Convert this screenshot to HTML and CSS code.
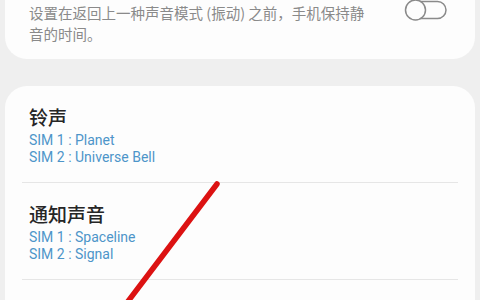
FILE: index.html
```html
<!DOCTYPE html>
<html lang="zh-CN">

<head>
   <meta charset="UTF-8">
   <meta name="viewport" content="width=device-width, initial-scale=1.0">
   <title>声音设置</title>
   <link rel="stylesheet" href="styles.css">
</head>

<body>
   <div class="card top-card">
      <p class="desc">设置在返回上一种声音模式 (振动) 之前，手机保持静音的时间。</p>
      <svg class="switch" width="46" height="24" viewBox="0 0 46 24">
         <rect x="3" y="3.5" width="40" height="17" rx="8.5" fill="none" stroke="#8a8a8a" stroke-width="1.5"/>
         <circle cx="12.5" cy="12" r="10" fill="#fdfdfd" stroke="#8a8a8a" stroke-width="1.5"/>
      </svg>
   </div>

   <div class="card list-card">
      <div class="row">
         <p class="row-title">铃声</p>
         <p class="row-sub">SIM 1 : Planet</p>
         <p class="row-sub">SIM 2 : Universe Bell</p>
      </div>
      <div class="row">
         <p class="row-title">通知声音</p>
         <p class="row-sub">SIM 1 : Spaceline</p>
         <p class="row-sub">SIM 2 : Signal</p>
      </div>
      <div class="row">
         <p class="row-title">系统声音</p>
      </div>
   </div>

   <!-- red mark drawn over the screenshot -->
   <svg class="mark" width="480" height="300" viewBox="0 0 480 300">
      <line x1="217" y1="184" x2="126" y2="304" stroke="#dc1212" stroke-width="5.5" stroke-linecap="round"/>
   </svg>
</body>
</html>
```

FILE: styles.css
```css
body{
   margin: 0;
   background-color: #efefef;
   font-family: Roboto, "Noto Sans CJK SC", sans-serif;
   position: relative;
   height: 300px;
   overflow: hidden;
}
p{
   margin: 0;
}
.card{
   background-color: #fdfdfd;
   margin: 0 5px;
}
.top-card{
   display: flex;
   justify-content: space-between;
   align-items: flex-start;
   padding: 2px 26px 15px 24px;
   border-radius: 0 0 22px 22px;
}
.desc{
   max-width: 342px;
   font-family: "Noto Sans CJK SC", sans-serif;
   font-size: 14.5px;
   line-height: 21px;
   color: #8a8a8a;
}
.switch{
   margin-top: -4px;
}
.list-card{
   margin-top: 27px;
   border-radius: 22px 22px 0 0;
   padding: 0 17px;
}
.row{
   padding: 19px 7px 16px;
   border-bottom: 1px solid #e6e6e6;
}
.row-title{
   font-family: "Noto Sans CJK SC", sans-serif;
   font-size: 19px;
   font-weight: 500;
   line-height: 24px;
   color: #262626;
   margin-bottom: 3px;
}
.row-sub{
   font-size: 14px;
   line-height: 17px;
   color: #4d95c9;
}
.mark{
   position: absolute;
   left: 0;
   top: 0;
}
```
